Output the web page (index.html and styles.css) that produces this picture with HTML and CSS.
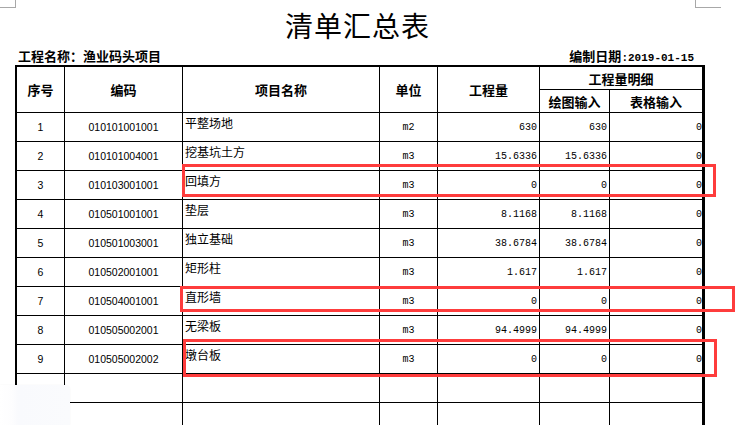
FILE: index.html
```html
<!DOCTYPE html>
<html lang="zh">
<head>
<meta charset="utf-8">
<title>清单汇总表</title>
<link rel="stylesheet" href="styles.css">
</head>
<body>
<div class="crop crop-tl"></div>
<div class="crop crop-tr"></div>
<div class="page">
  <h1 class="title">清单汇总表</h1>
  <div class="info">
    <span class="info-name">工程名称：渔业码头项目</span>
    <span class="info-date">编制日期<span class="mono">:2019-01-15</span></span>
  </div>
  <div class="sheet">
    <div class="cell head span-r">序号</div>
    <div class="cell head span-r">编码</div>
    <div class="cell head span-r">项目名称</div>
    <div class="cell head span-r">单位</div>
    <div class="cell head span-r">工程量</div>
    <div class="cell head span-c last">工程量明细</div>
    <div class="cell head">绘图输入</div>
    <div class="cell head last">表格输入</div>

    <div class="cell c">1</div><div class="cell c">010101001001</div><div class="cell name">平整场地</div><div class="cell unit">m2</div><div class="cell num">630</div><div class="cell num">630</div><div class="cell num last">0</div>
    <div class="cell c">2</div><div class="cell c">010101004001</div><div class="cell name">挖基坑土方</div><div class="cell unit">m3</div><div class="cell num">15.6336</div><div class="cell num">15.6336</div><div class="cell num last">0</div>
    <div class="cell c">3</div><div class="cell c">010103001001</div><div class="cell name">回填方</div><div class="cell unit">m3</div><div class="cell num">0</div><div class="cell num">0</div><div class="cell num last">0</div>
    <div class="cell c">4</div><div class="cell c">010501001001</div><div class="cell name">垫层</div><div class="cell unit">m3</div><div class="cell num">8.1168</div><div class="cell num">8.1168</div><div class="cell num last">0</div>
    <div class="cell c">5</div><div class="cell c">010501003001</div><div class="cell name">独立基础</div><div class="cell unit">m3</div><div class="cell num">38.6784</div><div class="cell num">38.6784</div><div class="cell num last">0</div>
    <div class="cell c">6</div><div class="cell c">010502001001</div><div class="cell name">矩形柱</div><div class="cell unit">m3</div><div class="cell num">1.617</div><div class="cell num">1.617</div><div class="cell num last">0</div>
    <div class="cell c">7</div><div class="cell c">010504001001</div><div class="cell name">直形墙</div><div class="cell unit">m3</div><div class="cell num">0</div><div class="cell num">0</div><div class="cell num last">0</div>
    <div class="cell c">8</div><div class="cell c">010505002001</div><div class="cell name">无梁板</div><div class="cell unit">m3</div><div class="cell num">94.4999</div><div class="cell num">94.4999</div><div class="cell num last">0</div>
    <div class="cell c">9</div><div class="cell c">010505002002</div><div class="cell name">墩台板</div><div class="cell unit">m3</div><div class="cell num">0</div><div class="cell num">0</div><div class="cell num last">0</div>
    <div class="cell"></div><div class="cell"></div><div class="cell"></div><div class="cell"></div><div class="cell"></div><div class="cell"></div><div class="cell last"></div>
    <div class="cell"></div><div class="cell"></div><div class="cell"></div><div class="cell"></div><div class="cell"></div><div class="cell"></div><div class="cell last"></div>
  </div>
</div>
<div class="mark mark-1"></div>
<div class="mark mark-2"></div>
<div class="mark mark-3"></div>
<div class="corner-pop"></div>
</body>
</html>
```
FILE: styles.css
```css
html, body {
  margin: 0;
  padding: 0;
  background: #ffffff;
  overflow: hidden;
}
body {
  position: relative;
  width: 735px;
  height: 425px;
  font-family: "Noto Sans CJK SC", "Liberation Sans", sans-serif;
  color: #000;
}
.page {
  margin-left: 15px;
  width: 690px;
  display: flex;
  flex-direction: column;
}
.title {
  margin: 11px 0 0 0;
  padding-right: 5px;
  font-size: 28px;
  line-height: 28px;
  height: 28px;
  font-weight: 400;
  letter-spacing: 1px;
  text-align: center;
}
.info {
  margin-top: 10px;
  height: 13px;
  display: flex;
  justify-content: space-between;
  padding: 0 11px 0 3px;
  font-size: 13px;
  line-height: 13px;
  font-weight: 700;
}
.mono {
  font-family: "Liberation Mono", "DejaVu Sans Mono", monospace;
  font-size: 11px;
  font-weight: 700;
}
.sheet {
  margin-top: 3px;
  display: grid;
  grid-template-columns: 48px 118px 197px 58px 102px 70px 92px;
  grid-template-rows: 23px 23px repeat(11, 29px);
  border-left: 2px solid #000;
  border-top: 2px solid #000;
  border-right: 3px solid #000;
}
.cell {
  box-sizing: border-box;
  border-right: 1px solid #000;
  border-bottom: 1px solid #000;
  display: flex;
  align-items: center;
  justify-content: center;
  overflow: hidden;
  white-space: nowrap;
}
.cell.last {
  border-right: none;
}
.head {
  font-size: 13px;
  font-weight: 700;
  line-height: 13px;
}
.span-r {
  grid-row: span 2;
}
.span-c {
  grid-column: span 2;
}
.c {
  font-family: "Liberation Sans", Arial, sans-serif;
  font-size: 10.5px;
}
.name {
  justify-content: flex-start;
  align-items: flex-start;
  padding: 3px 0 0 2px;
  font-size: 12px;
  line-height: 13px;
}
.unit {
  font-family: "Liberation Mono", "DejaVu Sans Mono", monospace;
  font-size: 10px;
}
.num {
  justify-content: flex-end;
  padding-right: 2px;
  font-family: "Liberation Mono", "DejaVu Sans Mono", monospace;
  font-size: 10px;
}
.num.last {
  padding-right: 0;
}
.crop {
  position: absolute;
  width: 0;
  height: 7px;
  top: 0;
}
.crop-tl {
  left: 0;
  width: 15px;
  border-right: 1px solid #a8a8a8;
  border-bottom: 1px solid #a8a8a8;
}
.crop-tr {
  left: 695px;
  width: 25px;
  border-left: 1px solid #a8a8a8;
  border-bottom: 1px solid #a8a8a8;
}
.mark {
  position: absolute;
  box-sizing: border-box;
  border: 3px solid #fe3c3c;
}
.mark-1 {
  left: 182px;
  top: 164px;
  width: 534px;
  height: 33px;
}
.mark-2 {
  left: 180px;
  top: 286px;
  width: 555px;
  height: 26px;
}
.mark-3 {
  left: 183px;
  top: 339px;
  width: 534px;
  height: 38px;
}
.corner-pop {
  position: absolute;
  left: 0;
  top: 385px;
  width: 70px;
  height: 40px;
  border-radius: 0 5px 0 0;
  background: linear-gradient(90deg, #ffffff 0px, #fdfdfe 12px, #f9fafd 18px, #fafbfd 100%);
  box-shadow: 0 0 2px rgba(0, 0, 0, 0.06);
}
```
